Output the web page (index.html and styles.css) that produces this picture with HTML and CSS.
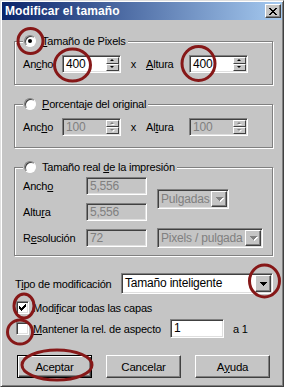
FILE: index.html
```html
<!DOCTYPE html>
<html lang="es">
<head>
  <meta charset="UTF-8" />
  <title>Modificar el tamaño</title>
  <link rel="stylesheet" href="styles.css">
</head>
<body>

  <div class="window">
    <div class="titlebar">
      <span class="title">Modificar el tamaño</span>
      <span class="close">
        <svg width="8" height="7" viewBox="0 0 8 7" shape-rendering="crispEdges"><path d="M0 0h2v1h-2zM6 0h2v1h-2zM1 1h2v1h-2zM5 1h2v1h-2zM2 2h4v1h-4zM3 3h2v1h-2zM2 4h4v1h-4zM1 5h2v1h-2zM5 5h2v1h-2zM0 6h2v1h-2zM6 6h2v1h-2z" fill="#000"/></svg>
      </span>
    </div>

    <div class="client">
      <!-- pixel size -->
      <fieldset class="group first">
        <legend><span class="radio on"></span><span><u>T</u>amaño de Pixels</span></legend>
        <div class="row">
          <span class="lbl lbl-a">An<u>c</u>ho</span>
          <div class="spin"><span class="val">400</span><span class="arrows"><span class="up"></span><span class="dn"></span></span></div>
          <span class="times">x</span>
          <span class="lbl lbl-b"><u>A</u>ltura</span>
          <div class="spin"><span class="val">400</span><span class="arrows"><span class="up"></span><span class="dn"></span></span></div>
        </div>
      </fieldset>

      <!-- percentage -->
      <fieldset class="group">
        <legend><span class="radio"></span><span><u>P</u>orcentaje del original</span></legend>
        <div class="row">
          <span class="lbl lbl-a">Anc<u>h</u>o</span>
          <div class="spin off"><span class="val">100</span><span class="arrows"><span class="up"></span><span class="dn"></span></span></div>
          <span class="times">x</span>
          <span class="lbl lbl-b">Al<u>t</u>ura</span>
          <div class="spin off"><span class="val">100</span><span class="arrows"><span class="up"></span><span class="dn"></span></span></div>
        </div>
      </fieldset>

      <!-- print size -->
      <fieldset class="group print">
        <legend><span class="radio"></span><span>Tamaño real <u>d</u>e la impresión</span></legend>
        <div class="print-grid">
          <span class="lbl">Anch<u>o</u></span>
          <span class="field off">5,556</span>
          <div class="combo off units">
            <span class="val">Pulgadas</span>
            <span class="drop"><svg width="7" height="4" viewBox="0 0 7 4" shape-rendering="crispEdges"><path d="M0 0h7v1h-7zM1 1h5v1h-5zM2 2h3v1h-3zM3 3h1v1h-1z"/></svg></span>
          </div>
          <span class="lbl">Altu<u>r</u>a</span>
          <span class="field off">5,556</span>
          <span class="lbl">R<u>e</u>solución</span>
          <span class="field off">72</span>
          <div class="combo off res">
            <span class="val">Pixels / pulgada</span>
            <span class="drop"><svg width="7" height="4" viewBox="0 0 7 4" shape-rendering="crispEdges"><path d="M0 0h7v1h-7zM1 1h5v1h-5zM2 2h3v1h-3zM3 3h1v1h-1z"/></svg></span>
          </div>
        </div>
      </fieldset>

      <div class="tipo">
        <span class="tipo-lbl">T<u>i</u>po de modificación</span>
        <div class="combo main">
          <span class="val">Tamaño inteligente</span>
          <span class="drop"><svg width="7" height="4" viewBox="0 0 7 4" shape-rendering="crispEdges"><path d="M0 0h7v1h-7zM1 1h5v1h-5zM2 2h3v1h-3zM3 3h1v1h-1z"/></svg></span>
        </div>
      </div>

      <div class="check-row first-check">
        <span class="box"><svg width="7" height="7" viewBox="0 0 7 7" shape-rendering="crispEdges"><path d="M6 0h1v3h-1zM5 1h1v3h-1zM4 2h1v3h-1zM3 3h1v3h-1zM2 4h1v3h-1zM1 3h1v3h-1zM0 2h1v3h-1z"/></svg></span>
        <span>Modi<u>f</u>icar todas las capas</span>
      </div>

      <div class="check-row second-check">
        <span class="box"></span>
        <span class="check-text"><u>M</u>antener la rel. de aspecto</span>
        <span class="field ratio">1</span>
        <span class="ratio-tail">a 1</span>
      </div>

      <div class="buttons">
        <span class="btn default">Aceptar</span>
        <span class="btn">Cancelar</span>
        <span class="btn">A<u>y</u>uda</span>
      </div>
    </div>

    <!-- red marks drawn over the dialog -->
    <svg class="marks" width="284" height="387" viewBox="0 0 284 387">
      <ellipse cx="29.5" cy="40" rx="12.5" ry="12.5"/>
      <ellipse cx="71.5" cy="64" rx="18" ry="16"/>
      <ellipse cx="197.5" cy="62.5" rx="16.5" ry="17"/>
      <ellipse cx="263.5" cy="280" rx="15" ry="16"/>
      <ellipse cx="23" cy="305" rx="10" ry="12"/>
      <ellipse cx="19" cy="331" rx="12.5" ry="12"/>
      <ellipse cx="56" cy="364" rx="35" ry="15"/>
    </svg>
  </div>

</body>
</html>
```

FILE: styles.css
```css
* {
  box-sizing: border-box;
}
body {
  margin: 0;
  font-family: "Liberation Sans", Arial, sans-serif;
  font-size: 11px;
  letter-spacing: -0.2px;
  color: #000;
}
u {
  text-decoration-thickness: 1px;
  text-underline-offset: 1px;
}

.window {
  position: relative;
  width: 284px;
  height: 387px;
  padding: 1px;
  background: #c5c5c5;
  border: 1px solid;
  border-color: #dfdfdf #404040 #404040 #dfdfdf;
  box-shadow: inset 1px 1px #fff, inset -1px -1px #808080;
}

.titlebar {
  height: 18px;
  display: flex;
  align-items: center;
  justify-content: space-between;
  padding: 0 1px 0 3px;
  background: linear-gradient(to right, #0a246a, #a6caf0);
}
.title {
  color: #fff;
  font-weight: bold;
  font-size: 12px;
  letter-spacing: 0.1px;
}
.close {
  width: 16px;
  height: 14px;
  display: flex;
  align-items: center;
  justify-content: center;
  background: #c5c5c5;
  border: 1px solid;
  border-color: #fff #404040 #404040 #fff;
  box-shadow: inset -1px -1px #808080;
}

.client {
  padding: 0 9px 0 12px;
}

/* etched group boxes */
.group {
  margin: 12px 0 0;
  padding: 7px 8px 11px;
  border: 1px solid #808080;
  box-shadow: inset 1px 1px #fff, 1px 1px #fff;
  min-width: 0;
}
.group.first {
  margin-top: 14px;
}
.group.print {
  padding-top: 3px;
  padding-bottom: 8px;
}
.group legend {
  display: flex;
  align-items: center;
  gap: 6px;
  height: 14px;
  padding: 0 2px 0 1px;
  background: #c5c5c5;
}

.radio {
  position: relative;
  width: 12px;
  height: 12px;
  border-radius: 50%;
  background: #fff;
  border: 1px solid;
  border-color: #808080 #fff #fff #808080;
  box-shadow: inset 1px 1px #404040;
}
.radio.on::after {
  content: "";
  position: absolute;
  left: 3px;
  top: 3px;
  width: 4px;
  height: 4px;
  border-radius: 50%;
  background: #000;
}

.row {
  display: flex;
  align-items: center;
  height: 18px;
}
.lbl-a {
  width: 39px;
}
.lbl-b {
  width: 43px;
}
.times {
  width: 25px;
  text-align: center;
}

/* sunken edit fields */
.spin,
.field,
.combo {
  border: 1px solid;
  border-color: #808080 #fff #fff #808080;
  box-shadow: inset 1px 1px #404040, inset -1px -1px #dfdfdf;
  padding: 1px;
  background: #fff;
}
.spin {
  display: flex;
  width: 59px;
  height: 18px;
}
.spin .val,
.combo .val {
  flex: 1;
  padding-left: 2px;
  line-height: 14px;
  font-size: 12px;
}
.arrows {
  display: flex;
  flex-direction: column;
  width: 13px;
}
.arrows span {
  flex: 1;
  position: relative;
  background: #c5c5c5;
  border: 1px solid;
  border-color: #fff #404040 #404040 #fff;
}
.arrows span::after {
  content: "";
  position: absolute;
  left: 3px;
  top: 1px;
  border-left: 2px solid transparent;
  border-right: 2px solid transparent;
}
.arrows .up::after {
  border-bottom: 2px solid #000;
}
.arrows .dn::after {
  border-top: 2px solid #000;
}
.off {
  background: #c5c5c5;
  color: #808080;
}
.off .arrows span::after {
  filter: drop-shadow(1px 1px 0 #fff);
}
.off .arrows .up::after {
  border-bottom-color: #808080;
}
.off .arrows .dn::after {
  border-top-color: #808080;
}

.field {
  height: 18px;
  padding-left: 3px;
  line-height: 14px;
  font-size: 12px;
}

.print-grid {
  display: grid;
  grid-template-columns: 63px 61px auto;
  grid-template-rows: 18px 18px 18px;
  row-gap: 8px;
  align-items: center;
}
.combo {
  display: flex;
  align-items: stretch;
  margin-left: 10px;
}
.combo.units {
  grid-column: 3;
  grid-row: 1 / span 2;
  width: 72px;
  height: 20px;
}
.combo.res {
  grid-column: 3;
  grid-row: 3;
  width: 106px;
  height: 20px;
}
.combo .val {
  line-height: 16px;
}
.drop {
  width: 16px;
  display: flex;
  align-items: center;
  justify-content: center;
  background: #c5c5c5;
  border: 1px solid;
  border-color: #fff #404040 #404040 #fff;
  box-shadow: inset -1px -1px #808080;
}
.drop svg {
  fill: #000;
}
.combo.off .drop svg {
  fill: #808080;
  filter: drop-shadow(1px 1px 0 #fff);
}

.tipo {
  display: flex;
  align-items: center;
  margin-top: 17px;
  padding-left: 1px;
}
.tipo-lbl {
  width: 106px;
}
.combo.main {
  margin-left: 0;
  width: 152px;
  height: 21px;
}
.combo.main .val {
  line-height: 17px;
}

.check-row {
  display: flex;
  align-items: center;
  padding-left: 2px;
}
.first-check {
  margin-top: 7px;
  height: 13px;
}
.second-check {
  margin-top: 5px;
  height: 19px;
}
.box {
  width: 13px;
  height: 13px;
  margin-right: 4px;
  display: flex;
  align-items: center;
  justify-content: center;
  background: #fff;
  border: 1px solid;
  border-color: #808080 #fff #fff #808080;
  box-shadow: inset 1px 1px #404040, inset -1px -1px #dfdfdf;
}
.check-text {
  width: 137px;
}
.field.ratio {
  width: 54px;
  height: 19px;
}
.ratio-tail {
  margin-left: 9px;
}

.buttons {
  display: flex;
  gap: 14px;
  margin-top: 17px;
  padding-left: 3px;
}
.btn {
  width: 75px;
  height: 23px;
  display: flex;
  align-items: center;
  justify-content: center;
  background: #c5c5c5;
  border: 1px solid;
  border-color: #fff #404040 #404040 #fff;
  box-shadow: inset -1px -1px #808080;
  font-size: 11.5px;
}
.btn.default {
  border: 1px solid #000;
  box-shadow: inset 1px 1px #fff, inset -1px -1px #404040, inset -2px -2px #808080;
}

.marks {
  position: absolute;
  left: 0;
  top: 0;
  pointer-events: none;
}
.marks ellipse {
  fill: none;
  stroke: #861818;
  stroke-width: 3;
}
```
